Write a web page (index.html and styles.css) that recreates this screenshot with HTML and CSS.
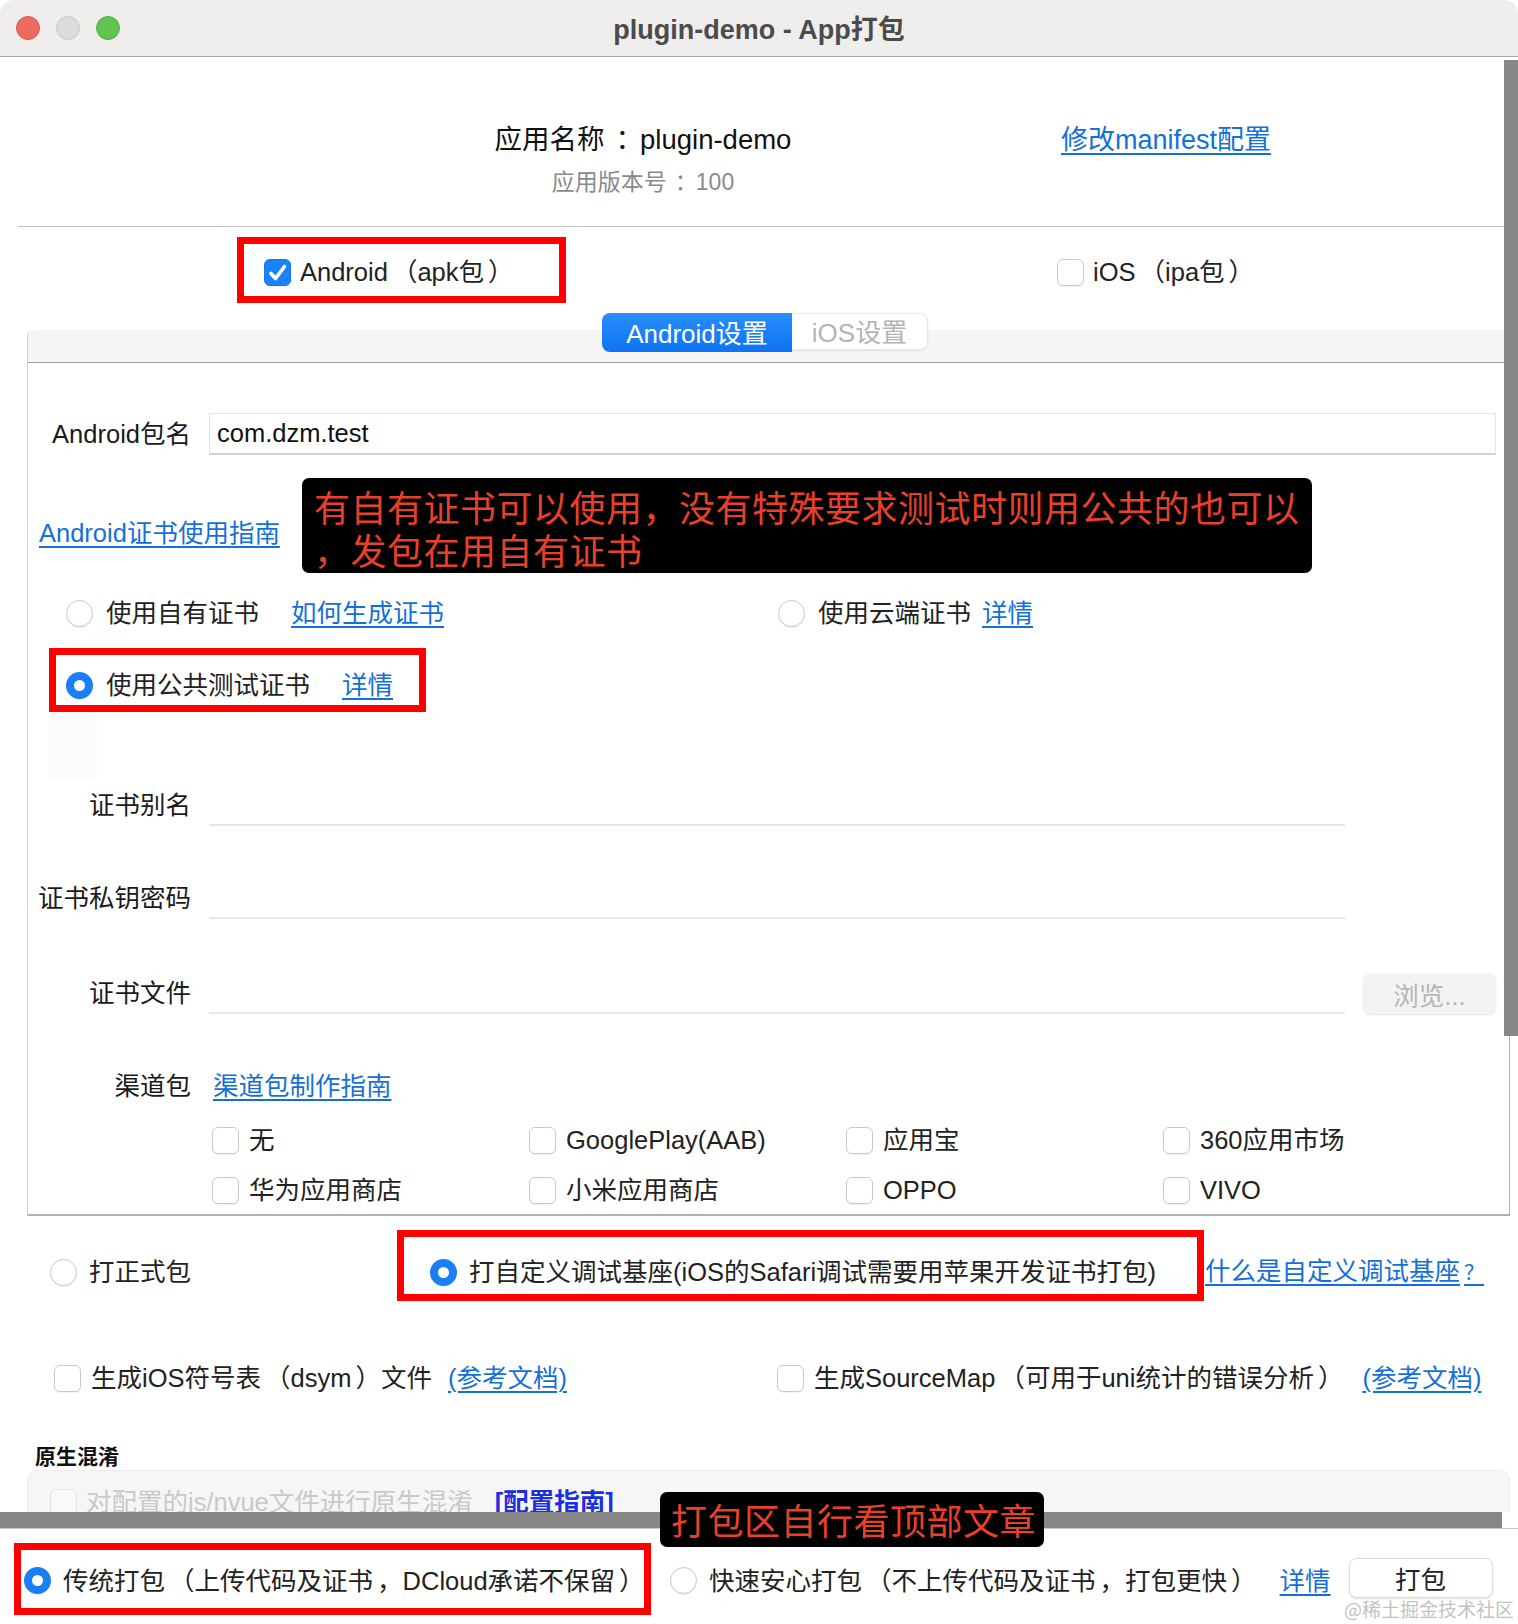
FILE: index.html
```html
<!DOCTYPE html>
<html lang="zh-CN">
<head>
<meta charset="utf-8">
<title>plugin-demo - App打包</title>
<link rel="stylesheet" href="styles.css">
</head>
<body>
<div class="window">
  <div class="titlebar">
    <div class="lights">
      <span class="light red"></span><span class="light gray"></span><span class="light green"></span>
    </div>
    <div class="title">plugin-demo - App打包</div>
    <div></div>
  </div>

  <div class="main">
    <div class="app-head">
      <div class="app-info">
        <div class="app-name">应用名称<span class="colon">：</span>plugin-demo</div>
        <div class="app-ver">应用版本号<span class="colon">：</span>100</div>
      </div>
      <a class="link manifest">修改manifest配置</a>
    </div>
    <div class="divider"></div>

    <div class="platforms">
      <div class="opt plat-android"><span class="cb on"><svg viewBox="0 0 27 27" width="27" height="27"><path d="M7 14.5 L11.5 19.5 L20.5 7.5" fill="none" stroke="#fff" stroke-width="3.6" stroke-linecap="round" stroke-linejoin="round"/></svg></span><span class="t">Android<span class="par">（</span>apk包<span class="par">）</span></span></div>
      <div class="opt"><span class="cb"></span><span class="t">iOS<span class="par">（</span>ipa包<span class="par">）</span></span></div>
    </div>

    <div class="panel">
      <div class="panel-head">
        <div class="tabs">
          <span class="tab active">Android设置</span>
          <span class="tab">iOS设置</span>
        </div>
      </div>
      <div class="panel-body">
        <div class="pkg-row">
          <span class="label">Android包名</span>
          <div class="pkg-input">com.dzm.test</div>
        </div>

        <div class="guide-row"><a class="link">Android证书使用指南</a></div>

        <div class="cert-row r1">
          <div class="opt group-own"><span class="rd"></span><span class="t">使用自有证书</span><a class="link how">如何生成证书</a></div>
          <div class="opt"><span class="rd"></span><span class="t">使用云端证书</span><a class="link cloud-detail">详情</a></div>
        </div>
        <div class="cert-row r2">
          <div class="opt"><span class="rd on"></span><span class="t">使用公共测试证书</span><a class="link pub-detail">详情</a></div>
        </div>
        <div class="ghost"></div>

        <div class="field f1">
          <span class="label">证书别名</span>
          <div class="line"></div>
        </div>
        <div class="field f2">
          <span class="label">证书私钥密码</span>
          <div class="line"></div>
        </div>
        <div class="field f3">
          <span class="label">证书文件</span>
          <div class="line"></div>
          <button class="browse">浏览...</button>
        </div>

        <div class="channel-row">
          <span class="label">渠道包</span>
          <a class="link channel-link">渠道包制作指南</a>
        </div>
        <div class="channel-grid">
          <div class="opt"><span class="cb"></span><span class="t">无</span></div>
          <div class="opt"><span class="cb"></span><span class="t">GooglePlay(AAB)</span></div>
          <div class="opt"><span class="cb"></span><span class="t">应用宝</span></div>
          <div class="opt"><span class="cb"></span><span class="t">360应用市场</span></div>
          <div class="opt"><span class="cb"></span><span class="t">华为应用商店</span></div>
          <div class="opt"><span class="cb"></span><span class="t">小米应用商店</span></div>
          <div class="opt"><span class="cb"></span><span class="t">OPPO</span></div>
          <div class="opt"><span class="cb"></span><span class="t">VIVO</span></div>
        </div>
      </div>
    </div>

    <div class="build-row">
      <div class="opt build-formal"><span class="rd"></span><span class="t">打正式包</span></div>
      <div class="opt build-custom"><span class="rd on"></span><span class="t">打自定义调试基座(iOS的Safari调试需要用苹果开发证书打包)</span></div>
      <a class="link">什么是自定义调试基座<span class="q">？</span></a>
    </div>

    <div class="check-row">
      <div class="opt dsym"><span class="cb"></span><span class="t">生成iOS符号表<span class="par">（</span>dsym<span class="par">）</span>文件</span><a class="link ref-a">(参考文档)</a></div>
      <div class="opt"><span class="cb"></span><span class="t">生成SourceMap<span class="par">（</span>可用于uni统计的错误分析<span class="par">）</span></span><a class="link ref-b">(参考文档)</a></div>
    </div>

    <div class="sec-title">原生混淆</div>
    <div class="obf-box">
      <div class="opt obf-opt"><span class="cb dis"></span><span class="t">对配置的js/nvue文件进行原生混淆</span><a class="cfg-link">[配置指南]</a></div>
    </div>

    <div class="vthumb"></div>
  </div>

  <div class="hbar"><div class="hthumb"></div></div>

  <div class="footer">
    <div class="opt foot-classic"><span class="rd on"></span><span class="t">传统打包<span class="par">（</span>上传代码及证书<span class="par">，</span>DCloud承诺不保留<span class="par">）</span></span></div>
    <div class="opt"><span class="rd"></span><span class="t">快速安心打包<span class="par">（</span>不上传代码及证书<span class="par">，</span>打包更快<span class="par">）</span></span></div>
    <a class="link foot-detail">详情</a>
    <button class="pack-btn">打包</button>
  </div>

  <div class="redbox rb1"></div>
  <div class="redbox rb2"></div>
  <div class="redbox rb3"></div>
  <div class="redbox rb4"></div>

  <div class="note note1">有自有证书可以使用，没有特殊要求测试时则用公共的也可以<br>，发包在用自有证书</div>
  <div class="note note2">打包区自行看顶部文章</div>

  <div class="watermark">@稀土掘金技术社区</div>
</div>
</body>
</html>
```

FILE: styles.css
```css
* { box-sizing: border-box; }
html, body { margin: 0; padding: 0; background: #fff; }
body {
  font-family: "Liberation Sans", "Noto Sans CJK SC", sans-serif;
  color: #222;
  font-size: 25.5px;
}
.window {
  position: relative;
  width: 1518px;
  height: 1624px;
  overflow: hidden;
  background: #fff;
  border-radius: 14px 14px 0 0;
}

/* title bar */
.titlebar {
  height: 57px;
  background: #f0eeec;
  border-bottom: 1px solid #a9a9a9;
  display: grid;
  grid-template-columns: 1fr auto 1fr;
  align-items: center;
}
.lights { display: flex; gap: 16px; padding-left: 16px; }
.light { width: 24px; height: 24px; border-radius: 50%; display: block; }
.light.red { background: #ec6a5f; border: 1px solid #d65a50; }
.light.gray { background: #dcdbda; border: 1px solid #c8c7c6; }
.light.green { background: #60c453; border: 1px solid #52ad46; }
.title {
  font-weight: bold;
  font-size: 27px;
  color: #4b4b4b;
  margin-top: -2px;
}

/* main area */
.main {
  position: relative;
  height: 1455px;
  overflow: hidden;
}
.vthumb {
  position: absolute;
  top: 3px;
  right: 0;
  width: 14px;
  height: 976px;
  background: #878787;
}

.link { color: #1470d8; text-decoration: underline; text-underline-offset: 4px; text-decoration-thickness: 2px; }

.app-head {
  height: 169px;
  padding: 65px 0 0 400px;
  display: flex;
  align-items: flex-start;
}
.app-info { width: 486px; text-align: center; }
.app-name { font-size: 27.5px; line-height: 36px; color: #111; }
.app-name .colon { margin-left: 11px; margin-right: -3px; }
.app-ver { font-size: 23px; line-height: 30px; color: #8a8a8a; margin-top: 9px; }
.app-ver .colon { margin-left: 8px; margin-right: -2px; }
.manifest { margin-left: 175px; font-size: 27px; line-height: 36px; }
.divider { margin-left: 18px; width: 1486px; height: 1px; background: #bdbdbd; }

.opt { display: flex; align-items: center; white-space: nowrap; flex: none; }
.opt > .t, .opt > a, .build-row > a, .footer > a { line-height: 36px; display: block; }
.par { padding-left: 4px; }

.cb {
  width: 27px; height: 27px; flex: none;
  border: 1px solid #c9c9c9;
  border-radius: 6px;
  background: #fff;
  box-shadow: 0 1px 1px rgba(0,0,0,0.06);
  margin-right: 10px;
  display: block;
}
.cb.on { background: #1a82fb; border-color: #1476ea; }
.cb.on svg { display: block; margin: -1px; }
.cb.dis { background: #f9f9f9; border-color: #e2e2e2; box-shadow: none; }

.rd {
  width: 27px; height: 27px; flex: none;
  border: 1px solid #c9c9c9;
  border-radius: 50%;
  background: #fff;
  box-shadow: 0 1px 1px rgba(0,0,0,0.07);
  margin-right: 12px;
  display: block;
}
.rd.on { background: #fff; border: 8px solid #1a7ff5; }

.platforms {
  height: 103px;
  padding: 27px 0 0 264px;
  display: flex;
  align-items: flex-start;
}
.platforms .opt { height: 36px; }
.platforms .cb { margin-right: 9px; }
.plat-android { width: 793px; }

/* panel */
.panel {
  margin-left: 27px;
  width: 1483px;
  border-left: 1px solid #cfcfcf;
  border-right: 1px solid #b4b4b4;
  border-bottom: 2px solid #b0b0b0;
  border-top-left-radius: 6px;
}
.panel-head {
  height: 33px;
  background: #f5f5f5;
  border-bottom: 1px solid #9d9d9d;
  border-top-left-radius: 6px;
  display: flex;
  justify-content: center;
}
.tabs { display: flex; align-items: flex-start; margin-top: -17px; margin-left: -7px; height: 39px; }
.tab {
  display: flex; align-items: center; justify-content: center;
  font-size: 26px;
  padding-bottom: 3px;
}
.tab.active {
  width: 190px; height: 39px;
  background: linear-gradient(#2b8dfc, #0c74f3);
  color: #fff;
  border-radius: 8px 0 0 8px;
}
.tab:not(.active) {
  width: 136px; height: 37px;
  background: #fff;
  color: #b4b4b4;
  border: 1px solid #e6e6e6;
  border-left: none;
  border-radius: 0 8px 8px 0;
  box-shadow: 0 1px 2px rgba(0,0,0,0.08);
}

.panel-body { padding-bottom: 6px; }
.label { width: 163px; text-align: right; margin-right: 18px; flex: none; line-height: 36px; color: #1a1a1a; }

.pkg-row { margin-top: 50px; display: flex; align-items: center; height: 42px; }
.pkg-input {
  width: 1287px; height: 42px;
  border: 1px solid #e4e4e4;
  border-bottom: 2px solid #d2d2d2;
  padding-left: 7px;
  line-height: 39px;
  color: #111;
}

.guide-row { margin-top: 60px; height: 36px; line-height: 36px; padding-left: 11px; }

.cert-row { height: 36px; display: flex; align-items: center; padding-left: 38px; }
.cert-row .rd { margin-right: 13px; }
.cert-row.r1 { margin-top: 44px; }
.cert-row.r2 { margin-top: 36px; }
.group-own { width: 712px; }
.how { margin-left: 32px; }
.cloud-detail { margin-left: 11px; }
.pub-detail { margin-left: 32px; }

.ghost { margin: 10px 0 0 21px; width: 48px; height: 67px; background: #fbfbfb; border-radius: 4px; }

.field { display: flex; align-items: flex-start; }
.field.f1 { margin-top: 7px; }
.field.f2 { margin-top: 54px; }
.field.f3 { margin-top: 56px; }
.line { width: 1136px; height: 39px; border-bottom: 2px solid #e6e6e6; flex: none; }
.browse {
  margin: -2px 0 0 18px;
  width: 133px; height: 41px;
  border: none;
  border-radius: 8px;
  background: #f3f3f3;
  box-shadow: 0 1px 2px rgba(0,0,0,0.12);
  color: #b5b5b5;
  font-family: inherit;
  font-size: 25.5px;
  padding: 0;
}

.channel-row { margin-top: 54px; display: flex; align-items: center; height: 36px; }
.channel-link { margin-left: 4px; line-height: 36px; }
.channel-grid {
  margin-top: 18px;
  padding-left: 184px;
  display: grid;
  grid-template-columns: repeat(4, 317px);
  row-gap: 14px;
}
.channel-grid .opt { height: 36px; }

/* below panel */
.build-row { margin-top: 38px; height: 36px; padding-left: 50px; display: flex; align-items: center; }
.build-formal { width: 380px; }
.build-custom { width: 775px; }
.q { font-size: 20px; margin-left: 4px; }

.check-row { margin-top: 70px; height: 36px; padding-left: 54px; display: flex; align-items: center; }
.dsym { width: 723px; }
.ref-a { margin-left: 16px; }
.ref-b { margin-left: 19px; }

.sec-title { margin-top: 48px; line-height: 26px; padding-left: 35px; font-size: 21px; font-weight: bold; color: #111; }
.obf-box {
  margin-left: 27px;
  width: 1483px;
  height: 90px;
  background: #f6f6f6;
  border: 1px solid #ececec;
  border-radius: 10px;
  padding: 13px 0 0 22px;
}
.obf-opt { height: 36px; color: #c9c9c9; }
.obf-opt .cb { margin-right: 9px; }
.cfg-link { margin-left: 22px; color: #1b2ee0; font-weight: bold; text-decoration: underline; }

/* horizontal bar + footer */
.hbar { height: 16px; display: flex; }
.hthumb { width: 1502px; background: #878787; }

.footer {
  height: 96px;
  border-top: 1px solid #c4c4c4;
  display: flex;
  align-items: center;
  padding: 8px 0 0 24px;
}
.foot-classic { width: 646px; }
.foot-detail { margin-left: 23px; }
.pack-btn {
  margin: -6px 0 0 18px;
  width: 144px; height: 40px;
  border: 1px solid #dcdcdc;
  border-radius: 8px;
  background: #fff;
  box-shadow: 0 1px 2px rgba(0,0,0,0.12);
  font-family: inherit;
  font-size: 25.5px;
  color: #222;
  padding: 0;
}

/* annotation overlays */
.redbox { position: absolute; border: 7px solid #ff0000; }
.rb1 { left: 237px; top: 237px; width: 329px; height: 66px; }
.rb2 { left: 49px; top: 648px; width: 377px; height: 64px; }
.rb3 { left: 397px; top: 1230px; width: 807px; height: 71px; }
.rb4 { left: 14px; top: 1543px; width: 637px; height: 72px; }

.note {
  position: absolute;
  background: #000;
  color: #e8402a;
  font-family: "Noto Sans CJK SC", sans-serif;
  font-size: 36px;
  letter-spacing: 0.5px;
  border-radius: 7px;
  white-space: nowrap;
}
.note1 { left: 302px; top: 478px; width: 1010px; height: 95px; padding: 7px 0 0 12px; line-height: 43px; }
.note2 { left: 660px; top: 1492px; width: 384px; height: 55px; padding: 0 0 0 11px; line-height: 55px; }

.watermark {
  position: absolute;
  right: 4px;
  bottom: 3px;
  font-family: "Noto Sans CJK SC", sans-serif;
  font-size: 19px;
  line-height: 24px;
  color: #c2c2c2;
}
```
